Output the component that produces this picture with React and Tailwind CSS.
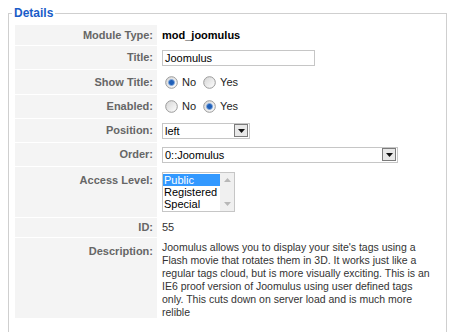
import React from 'react';

const Radio = ({ checked }) => (
  <svg width="13" height="13" viewBox="0 0 13 13" className="shrink-0">
    <defs>
      <linearGradient id={checked ? 'rg1' : 'rg0'} x1="0" y1="0" x2="1" y2="1">
        <stop offset="0" stopColor="#d4d4d4" />
        <stop offset="1" stopColor="#ffffff" />
      </linearGradient>
    </defs>
    <circle cx="6.5" cy="6.5" r="5.8" fill={`url(#${checked ? 'rg1' : 'rg0'})`} stroke="#9a9a9a" strokeWidth="1" />
    {checked && <circle cx="6.5" cy="6.5" r="3" fill="#1f5fb8" stroke="#7fa8de" strokeWidth="0.8" />}
  </svg>
);

const DropButton = () => (
  <div className="w-[14px] h-[13px] border border-[#7b7b7b] bg-[#e8e8e8] flex items-center justify-center shrink-0">
    <svg width="7" height="4" viewBox="0 0 7 4">
      <path d="M0 0 L7 0 L3.5 4 Z" fill="#111" />
    </svg>
  </div>
);

const Select = ({ value, width }) => (
  <div className={`flex items-center border border-[#c6c6c6] bg-white h-[16px] pl-[2px] pr-[1px] ${width}`}>
    <span className="flex-1 leading-[14px] text-[11px] text-black">{value}</span>
    <DropButton />
  </div>
);

const Row = ({ label, children, h, top = false }) => (
  <div className={`flex gap-[1px] ${h}`}>
    <div
      className={`w-[142px] shrink-0 bg-[#f4f4f4] pr-[4px] text-right font-bold text-[11px] text-[#666] flex justify-end ${top ? 'items-start pt-[5px]' : 'items-center'}`}
    >
      {label}
    </div>
    <div className={`flex-1 pl-[4px] flex ${top ? 'items-start' : 'items-center'}`}>{children}</div>
  </div>
);

export default function App() {
  return (
    <div className="w-[450px] h-[332px] overflow-hidden bg-white font-['Liberation_Sans',Arial,sans-serif]">
      <fieldset className="ml-[8px] mr-[3px] mt-[6px] border border-[#cfcfcf] pl-[6px] pr-[5px] h-[340px]">
        <legend className="ml-[-3px] px-[2px] text-[12px] font-bold text-[#1a5cc8] leading-[14px]">Details</legend>
        <div className="flex flex-col gap-[1px] mt-[5px]">
          <Row label="Module Type:" h="h-[20px]">
            <span className="font-bold text-[11px] text-black">mod_joomulus</span>
          </Row>
          <Row label="Title:" h="h-[23px]">
            <div className="w-[153px] h-[16px] border border-[#c6c6c6] px-[2px] text-[11px] leading-[14px] text-black">
              Joomulus
            </div>
          </Row>
          <Row label="Show Title:" h="h-[24px]">
            <div className="flex items-center text-[11px] text-[#222] pl-[3px]">
              <Radio checked />
              <span className="ml-[4px] mr-[7px]">No</span>
              <Radio />
              <span className="ml-[4px]">Yes</span>
            </div>
          </Row>
          <Row label="Enabled:" h="h-[23px]">
            <div className="flex items-center text-[11px] text-[#222] pl-[3px]">
              <Radio />
              <span className="ml-[4px] mr-[7px]">No</span>
              <Radio checked />
              <span className="ml-[4px]">Yes</span>
            </div>
          </Row>
          <Row label="Position:" h="h-[23px]">
            <Select value="left" width="w-[88px]" />
          </Row>
          <Row label="Order:" h="h-[23px]">
            <Select value="0::Joomulus" width="w-[236px]" />
          </Row>
          <Row label="Access Level:" h="h-[50px]" top>
            <div className="mt-[5px] flex w-[73px] h-[40px] border border-[#c6c6c6] bg-white">
              <div className="flex-1 text-[11px] leading-[12px] text-black pt-[1px]">
                <div className="bg-[#3399ff] text-white pl-[1px]">Public</div>
                <div className="pl-[1px]">Registered</div>
                <div className="pl-[1px]">Special</div>
              </div>
              <div className="w-[14px] bg-[#f0f0f0] flex flex-col items-center justify-between py-[5px]">
                <svg width="7" height="4" viewBox="0 0 7 4"><path d="M0 4 L3.5 0 L7 4 Z" fill="#b8b8b8" /></svg>
                <svg width="7" height="4" viewBox="0 0 7 4"><path d="M0 0 L3.5 4 L7 0 Z" fill="#b8b8b8" /></svg>
              </div>
            </div>
          </Row>
          <Row label="ID:" h="h-[19px]">
            <span className="text-[11px] text-[#333]">55</span>
          </Row>
          <Row label="Description:" h="h-[80px]" top>
            <p className="pt-[3px] text-[10.5px] leading-[13px] text-[#333]">
              Joomulus allows you to display your site's tags using a<br />
              Flash movie that rotates them in 3D. It works just like a<br />
              regular tags cloud, but is more visually exciting. This is an<br />
              IE6 proof version of Joomulus using user defined tags<br />
              only. This cuts down on server load and is much more<br />
              relible
            </p>
          </Row>
        </div>
      </fieldset>
    </div>
  );
}
